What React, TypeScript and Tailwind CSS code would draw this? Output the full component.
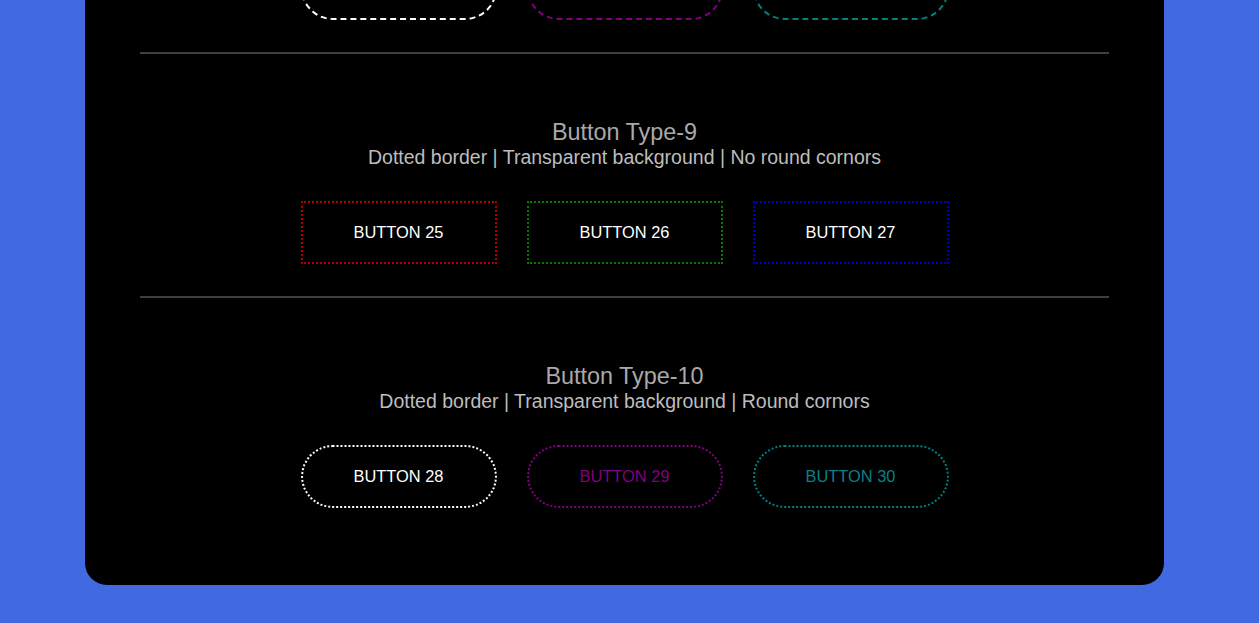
const sections = [
  {
    title: 'Button Type-8',
    sub: 'Dashed border | Transparent background | Round cornors',
    buttons: [
      { label: '', cls: 'rounded-full border-dashed border-white text-white' },
      { label: '', cls: 'rounded-full border-dashed border-[#800080] text-[#800080]' },
      { label: '', cls: 'rounded-full border-dashed border-[#008080] text-[#008080]' },
    ],
  },
  {
    title: 'Button Type-9',
    sub: 'Dotted border | Transparent background | No round cornors',
    buttons: [
      { label: 'BUTTON 25', cls: 'border-dotted border-[#b00000] text-white' },
      { label: 'BUTTON 26', cls: 'border-dotted border-[#007a00] text-white' },
      { label: 'BUTTON 27', cls: 'border-dotted border-[#0000c0] text-white' },
    ],
  },
  {
    title: 'Button Type-10',
    sub: 'Dotted border | Transparent background | Round cornors',
    buttons: [
      { label: 'BUTTON 28', cls: 'rounded-full border-dotted border-white text-white' },
      { label: 'BUTTON 29', cls: 'rounded-full border-dotted border-[#800080] text-[#800080]' },
      { label: 'BUTTON 30', cls: 'rounded-full border-dotted border-[#008080] text-[#0a7f8a]' },
    ],
  },
]

function Section({ title, sub, buttons, hidden }: (typeof sections)[number] & { hidden?: boolean }) {
  return (
    <div className="flex flex-col items-center">
      {hidden ? (
        <div className="pt-[66px] h-[115px]" />
      ) : (
        <>
          <h2 className="pt-[66px] text-[23.4px] leading-[25px] font-normal text-[#a9a9a9]">{title}</h2>
          <p className="text-[19.5px] leading-[24px] text-[#bdbdbd]">{sub}</p>
        </>
      )}
      <div className="mt-[32px] flex gap-[30px]">
        {buttons.map((b, i) => (
          <button
            key={i}
            className={`flex h-[63px] w-[196px] items-center justify-center border-2 bg-transparent text-[16.4px] ${b.cls}`}
          >
            {b.label}
          </button>
        ))}
      </div>
    </div>
  )
}

export default function App() {
  return (
    <div
      className="flex h-screen w-screen flex-col justify-end overflow-hidden bg-[#4169e1]"
      style={{ fontFamily: '"Liberation Sans", Arial, sans-serif' }}
    >
      <div className="mb-[38px] ml-[85px] w-[1079px] shrink-0 rounded-[22px] bg-black px-[55px] pb-[77px]">
        {sections.map((s, i) => (
          <div key={s.title}>
            {i > 0 && <div className="mt-[32px] h-[2px] bg-[#3f3f3f]" />}
            <Section {...s} hidden={i === 0} />
          </div>
        ))}
      </div>
    </div>
  )
}
